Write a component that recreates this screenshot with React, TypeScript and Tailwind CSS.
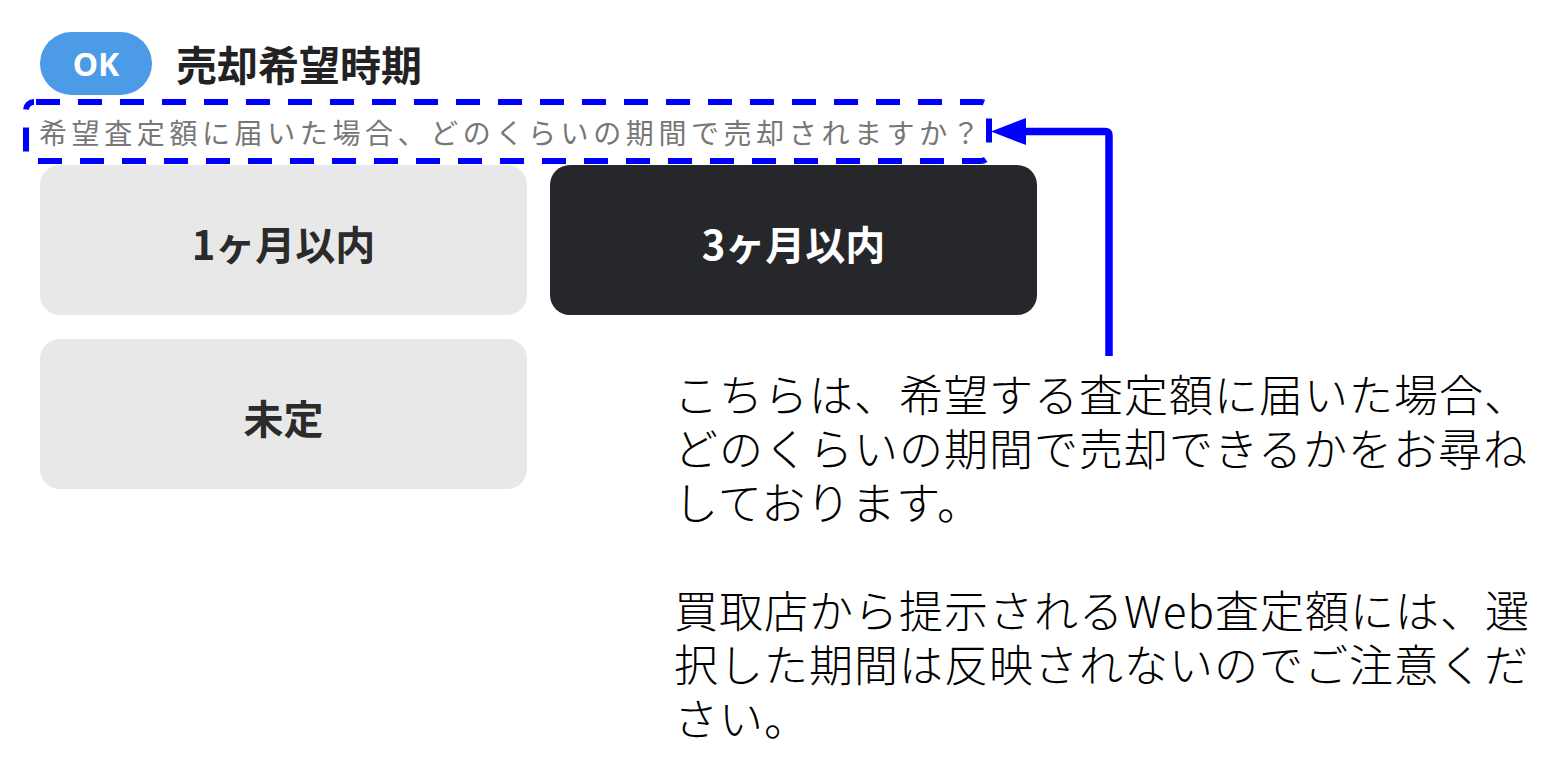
const jp = "font-['Noto_Sans_CJK_JP',sans-serif]";

const options = [
  { label: "1ヶ月以内", selected: false },
  { label: "3ヶ月以内", selected: true },
  { label: "未定", selected: false },
];

function CalloutArrow() {
  return (
    <svg className="pointer-events-none absolute left-0 top-0" width="1560" height="784" viewBox="0 0 1560 784">
      <path d="M1022 131.5 H1105 Q1109 131.5 1109 135.5 V356" fill="none" stroke="#0000ff" strokeWidth="7.5" />
      <polygon points="991,131.5 1026,118 1026,145" fill="#0000ff" />
    </svg>
  );
}

export default function App() {
  return (
    <div className={`relative h-[784px] w-[1560px] overflow-hidden bg-white ${jp}`}>
      <div className="w-[1040px] pl-[40px] pt-[32px]">
        <div className="flex items-center gap-[24px]">
          <div className="flex h-[63px] w-[112px] items-center justify-center rounded-full bg-[#4b9be6]">
            <span className="font-['Noto_Sans',sans-serif] text-[32px] font-bold leading-none text-white">OK</span>
          </div>
          <h1 className="text-[41px] font-bold leading-none text-[#222]">売却希望時期</h1>
        </div>

        <div className="relative -ml-[17px] mt-[4px] flex h-[65px] w-[969px] items-center pl-[16px]">
          <svg className="pointer-events-none absolute inset-0" width="969" height="65" viewBox="0 0 969 65">
            <rect x="3" y="3" width="963" height="59" rx="8" fill="none" stroke="#0000ff" strokeWidth="6" strokeDasharray="24 18" strokeDashoffset="-2" />
          </svg>
          <p className="text-[28px] leading-none tracking-[4.6px] text-[#777]">
            希望査定額に届いた場合、どのくらいの期間で売却されますか？
          </p>
        </div>

        <div className="mt-[1px] grid w-[997px] grid-cols-2 gap-x-[23px] gap-y-[24px]">
          {options.map((o) => (
            <button
              key={o.label}
              type="button"
              className={`flex h-[150px] items-center justify-center rounded-[20px] text-[40px] font-bold leading-none ${
                o.selected ? "bg-[#26272b] text-white" : "bg-[#e8e8e8] text-[#2b2b2b]"
              }`}
            >
              <span className="translate-y-[3px]">{o.label}</span>
            </button>
          ))}
        </div>
      </div>

      <CalloutArrow />

      <div className="absolute left-[674px] top-[366px] w-[875px] text-[44px] font-light leading-[54px] tracking-[1px] text-black">
        <p>こちらは、希望する査定額に届いた場合、どのくらいの期間で売却できるかをお尋ねしております。</p>
        <p className="mt-[54px]">買取店から提示されるWeb査定額には、選択した期間は反映されないのでご注意ください。</p>
      </div>
    </div>
  );
}
